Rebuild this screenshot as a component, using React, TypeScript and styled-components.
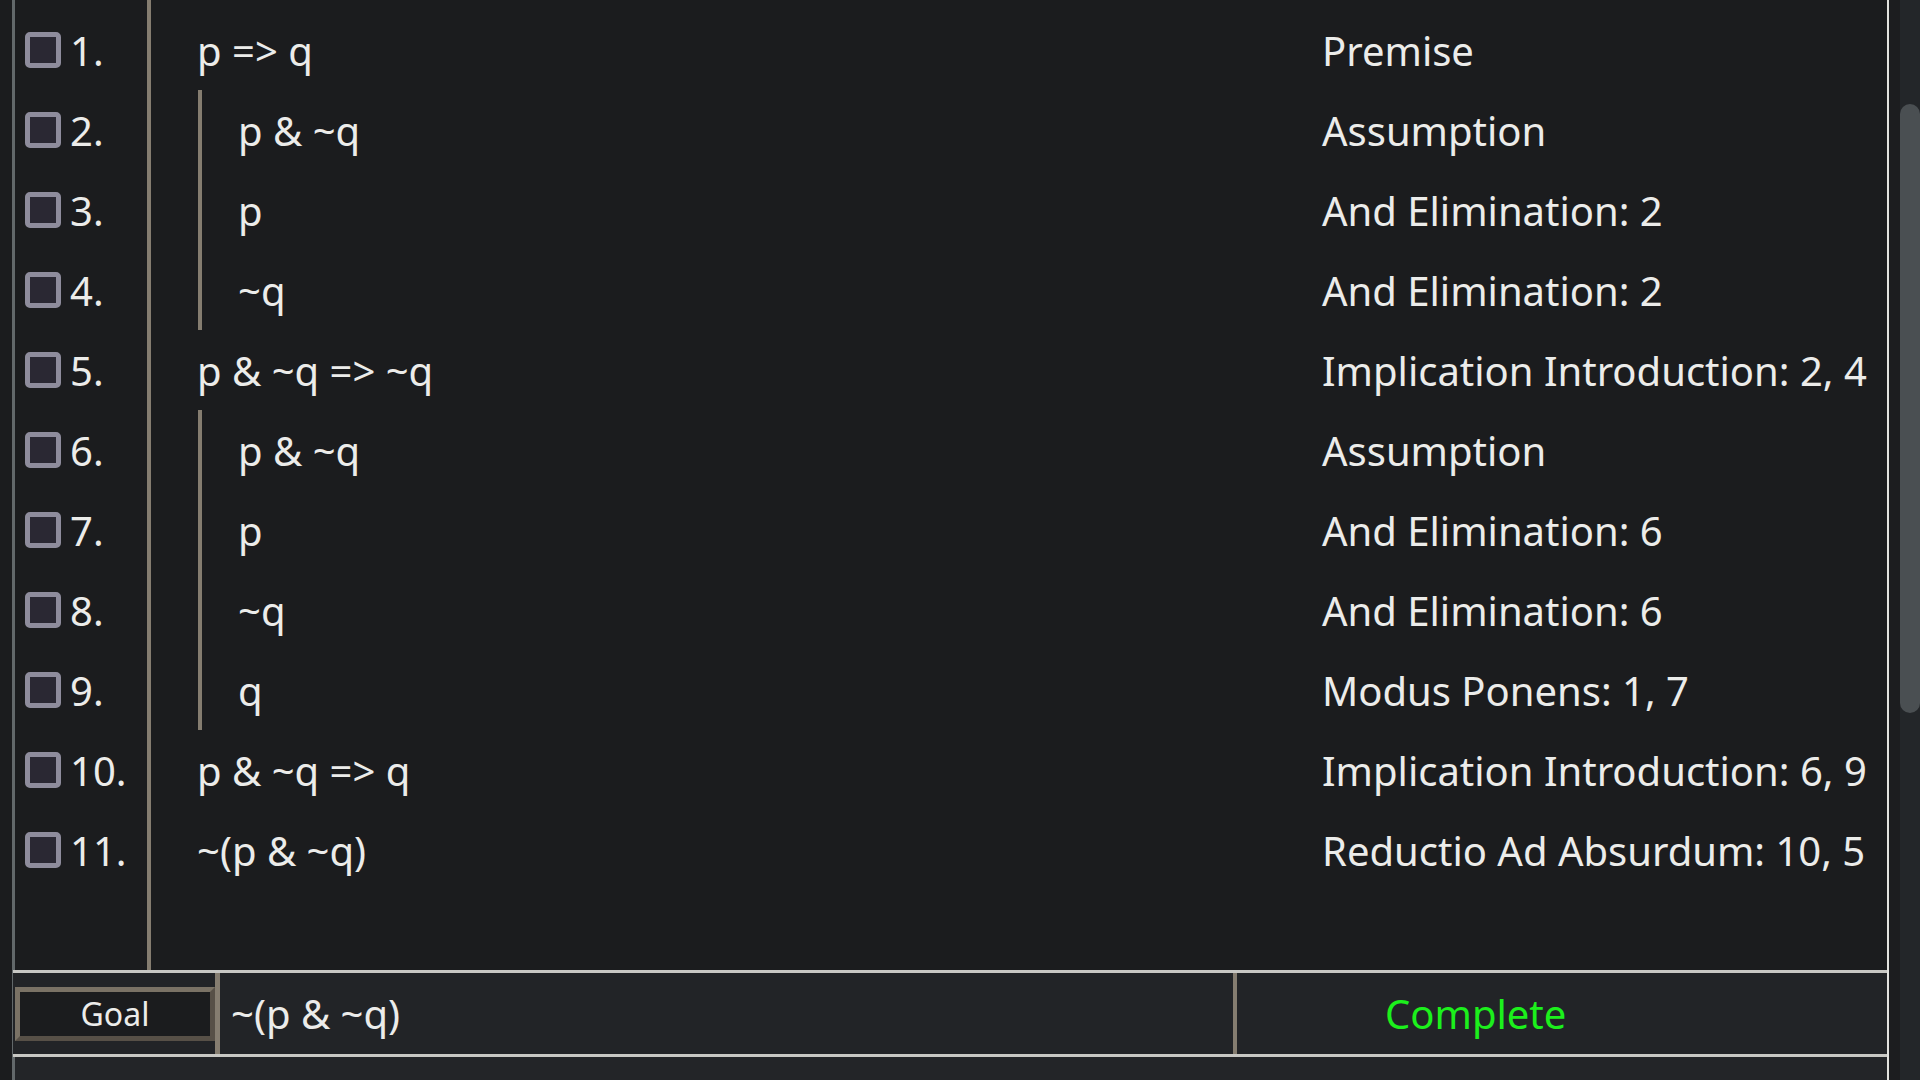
import { FunctionComponent } from 'react';
import styled, { createGlobalStyle } from 'styled-components';

interface Line {
  formula: string;
  depth: number;
  rule: string;
}

const lines: Line[] = [
  { formula: 'p => q', depth: 0, rule: 'Premise' },
  { formula: 'p & ~q', depth: 1, rule: 'Assumption' },
  { formula: 'p', depth: 1, rule: 'And Elimination: 2' },
  { formula: '~q', depth: 1, rule: 'And Elimination: 2' },
  { formula: 'p & ~q => ~q', depth: 0, rule: 'Implication Introduction: 2, 4' },
  { formula: 'p & ~q', depth: 1, rule: 'Assumption' },
  { formula: 'p', depth: 1, rule: 'And Elimination: 6' },
  { formula: '~q', depth: 1, rule: 'And Elimination: 6' },
  { formula: 'q', depth: 1, rule: 'Modus Ponens: 1, 7' },
  { formula: 'p & ~q => q', depth: 0, rule: 'Implication Introduction: 6, 9' },
  { formula: '~(p & ~q)', depth: 0, rule: 'Reductio Ad Absurdum: 10, 5' },
];

const GlobalStyle = createGlobalStyle`
  html, body {
    margin: 0;
    padding: 0;
    background: #1b1c1e;
    overflow: hidden;
  }
  body {
    font-family: "Noto Sans", "Open Sans", sans-serif;
    color: #ececea;
  }
`;

const Screen = styled.div`
  display: flex;
  width: 1920px;
  height: 1080px;
  background: #1b1c1e;
`;

const Panel = styled.div`
  flex: 1;
  margin-left: 12px;
  display: flex;
  flex-direction: column;
  border-left: 3px solid #62686a;
  border-right: 2px solid #e2e2de;
`;

const ProofArea = styled.div`
  height: 970px;
  display: grid;
  grid-template-columns: 136px 1fr;
`;

const Gutter = styled.div`
  border-right: 4px solid #857d70;
  padding-top: 10px;
  display: flex;
  flex-direction: column;
`;

const NumberCell = styled.div`
  height: 80px;
  display: flex;
  align-items: center;
  padding-left: 10px;
  gap: 9px;
  font-size: 40px;
`;

const CheckBox = styled.div`
  width: 26px;
  height: 26px;
  border: 5px solid #8e8c9c;
  border-radius: 5px;
  background: #2a2833;
`;

const Lines = styled.div`
  padding-top: 10px;
  display: flex;
  flex-direction: column;
`;

const LineRow = styled.div`
  height: 80px;
  display: grid;
  grid-template-columns: 1fr 565px;
  align-items: stretch;
  font-size: 40px;
`;

const Formula = styled.div`
  padding-left: 46px;
  display: flex;
`;

const Subproof = styled.div<{ $depth: number }>`
  display: flex;
  align-items: center;
  border-left: ${(p) => (p.$depth > 0 ? '4px solid #857d70' : 'none')};
  padding-left: ${(p) => (p.$depth > 0 ? '36px' : '0')};
  margin-left: ${(p) => (p.$depth > 0 ? '1px' : '0')};
`;

const Rule = styled.div`
  display: flex;
  align-items: center;
  white-space: nowrap;
`;

const GoalBar = styled.div`
  height: 81px;
  margin-left: -2px;
  border-top: 3px solid #c8c8c4;
  border-bottom: 3px solid #c8c8c4;
  background: #222427;
  display: grid;
  grid-template-columns: 202px 5px 1013px 4px 1fr;
  align-items: center;
`;

const GoalButton = styled.div`
  margin-left: 2px;
  height: 44px;
  border: 5px solid;
  border-color: #7a7265 #575047 #575047 #7a7265;
  background: #1b1c1e;
  display: flex;
  align-items: center;
  justify-content: center;
  font-size: 32px;
`;

const Divider = styled.div`
  align-self: stretch;
  background: #857d70;
`;

const GoalFormula = styled.div`
  padding-left: 11px;
  font-size: 40px;
`;

const Status = styled.div`
  padding-left: 148px;
  font-size: 40px;
  font-stretch: condensed;
  color: #1cf01c;
`;

const Footer = styled.div`
  flex: 1;
  background: #232528;
`;

const Gap = styled.div`
  width: 11px;
  background: #1c1d1f;
`;

const ScrollTrack = styled.div`
  width: 20px;
  background: #232629;
  padding-top: 104px;
`;

const ScrollThumb = styled.div`
  height: 609px;
  border-radius: 10px;
  background: #4a4f52;
`;

const App: FunctionComponent = () => {
  return (
    <Screen>
      <GlobalStyle />
      <Panel>
        <ProofArea>
          <Gutter>
            {lines.map((line, i) => (
              <NumberCell key={i}>
                <CheckBox />
                <span>{i + 1}.</span>
              </NumberCell>
            ))}
          </Gutter>
          <Lines>
            {lines.map((line, i) => (
              <LineRow key={i}>
                <Formula>
                  <Subproof $depth={line.depth}>{line.formula}</Subproof>
                </Formula>
                <Rule>{line.rule}</Rule>
              </LineRow>
            ))}
          </Lines>
        </ProofArea>
        <GoalBar>
          <GoalButton>Goal</GoalButton>
          <Divider />
          <GoalFormula>~(p &amp; ~q)</GoalFormula>
          <Divider />
          <Status>Complete</Status>
        </GoalBar>
        <Footer />
      </Panel>
      <Gap />
      <ScrollTrack>
        <ScrollThumb />
      </ScrollTrack>
    </Screen>
  );
};

export default App;
